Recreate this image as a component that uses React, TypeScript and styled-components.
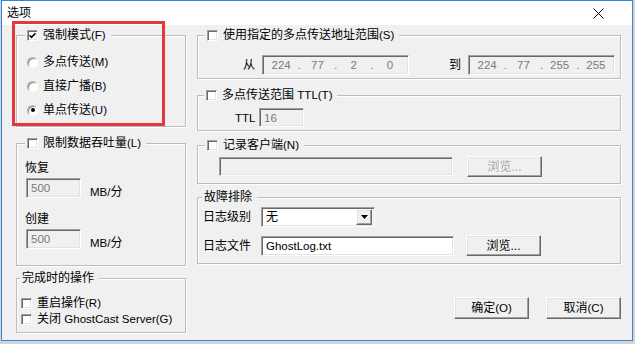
import React from "react";
import styled, { createGlobalStyle, css } from "styled-components";

const GlobalStyle = createGlobalStyle`
  html, body {
    margin: 0;
    padding: 0;
  }
  body {
    background: #d4d4d4;
    font-family: "Liberation Sans", "Noto Sans CJK SC", sans-serif;
    font-size: 12px;
    color: #000;
  }
  #root {
    width: 635px;
    height: 344px;
    overflow: hidden;
  }
`;

const sunken = css`
  box-sizing: border-box;
  border: 1px solid;
  border-color: #a0a0a0 #fff #fff #a0a0a0;
  box-shadow: inset 1px 1px 0 #696969, inset -1px -1px 0 #e3e3e3;
`;

const raised = css`
  box-sizing: border-box;
  border: 1px solid;
  border-color: #fff #696969 #696969 #fff;
  box-shadow: inset -1px -1px 0 #a0a0a0, inset 1px 1px 0 #e3e3e3;
`;

// Latin runs are drawn a touch smaller, as the dialog's UI font does
const Latin = styled.span`
  font-size: 11.5px;
`;

const DialogWindow = styled.div`
  position: relative;
  box-sizing: border-box;
  width: 632px;
  height: 341px;
  margin-left: 1px;
  border: 1px solid #2f86d8;
  background: #f0f0f0;
  display: flex;
  flex-direction: column;
`;

const TitleBar = styled.div`
  flex: none;
  height: 24px;
  background: #fff;
  display: flex;
  align-items: center;
  justify-content: space-between;
  padding: 0 28px 0 5px;
`;

const Title = styled.span`
  line-height: 14px;
`;

const CloseIcon = styled.svg`
  display: block;
`;

const Body = styled.div`
  display: grid;
  grid-template-columns: 170px 424px;
  column-gap: 11px;
  padding: 10px 0 0 14px;
`;

const Column = styled.div`
  display: flex;
  flex-direction: column;
`;

const GroupBox = styled.div<{ $height: number; $gap?: number }>`
  position: relative;
  flex: none;
  box-sizing: border-box;
  height: ${(p) => p.$height}px;
  margin-top: ${(p) => p.$gap ?? 0}px;
  border: 1px solid #bcbcbc;
  box-shadow: inset 1px 1px 0 #fff, 1px 1px 0 #fff;
`;

const GroupLegend = styled.div<{ $left: number }>`
  position: absolute;
  top: -8px;
  left: ${(p) => p.$left}px;
  height: 14px;
  padding: 0 5px 0 2px;
  background: #f0f0f0;
  display: flex;
  align-items: center;
  gap: 5px;
  line-height: 14px;
  white-space: nowrap;
`;

const CheckBox = styled.span`
  ${sunken};
  flex: none;
  width: 11px;
  height: 11px;
  background: #fff;
  display: inline-flex;
  align-items: center;
  justify-content: center;
`;

const Radio = styled.span<{ $on?: boolean }>`
  ${sunken};
  flex: none;
  width: 11px;
  height: 11px;
  border-radius: 50%;
  border-color: #b4b4b4 #fff #fff #b4b4b4;
  box-shadow: inset 1px 1px 0 #8a8a8a;
  background: #fff;
  display: inline-flex;
  align-items: center;
  justify-content: center;

  &::after {
    content: "";
    display: ${(p) => (p.$on ? "block" : "none")};
    width: 4px;
    height: 4px;
    border-radius: 50%;
    background: #000;
  }
`;

const OptionList = styled.div<{ $pad: string }>`
  display: flex;
  flex-direction: column;
  padding: ${(p) => p.$pad};
`;

const OptionRow = styled.div<{ $h: number }>`
  height: ${(p) => p.$h}px;
  display: flex;
  align-items: center;
  gap: 5px;
  line-height: 14px;
  white-space: nowrap;
`;

const TextField = styled.div<{ $width: number; $height: number; $disabled?: boolean }>`
  ${sunken};
  flex: none;
  width: ${(p) => p.$width}px;
  height: ${(p) => p.$height}px;
  padding-left: 4px;
  background: ${(p) => (p.$disabled ? "#f0f0f0" : "#fff")};
  color: ${(p) => (p.$disabled ? "#7a7a7a" : "#000")};
  font-size: 11.5px;
  display: flex;
  align-items: center;
  line-height: 14px;
`;

const RateForm = styled.div`
  display: flex;
  flex-direction: column;
  padding: 17px 0 0 8px;
`;

const FieldLabel = styled.div<{ $gap?: number }>`
  line-height: 14px;
  margin-top: ${(p) => p.$gap ?? 0}px;
`;

const RateRow = styled.div`
  display: flex;
  align-items: flex-start;
  margin-top: 3px;
  padding-left: 1px;
`;

const Unit = styled.span`
  margin-left: 9px;
  padding-top: 7px;
  line-height: 14px;
`;

const RangeRow = styled.div`
  display: flex;
  align-items: center;
  gap: 7px;
  padding: 19px 0 0 45px;
`;

const RangeLabel = styled.span<{ $gap?: number }>`
  margin-left: ${(p) => p.$gap ?? 0}px;
  line-height: 14px;
`;

const IpBox = styled.div`
  ${sunken};
  flex: none;
  width: 147px;
  height: 20px;
  background: #f0f0f0;
  color: #7a7a7a;
  font-size: 11.5px;
  display: flex;
  align-items: center;
  line-height: 14px;
`;

const IpPart = styled.span`
  flex: 1;
  text-align: center;
`;

const IpDot = styled.span`
  width: 0;
  display: flex;
  justify-content: center;
`;

const InlineRow = styled.div<{ $pad: string; $gap?: number }>`
  display: flex;
  align-items: center;
  gap: ${(p) => p.$gap ?? 0}px;
  padding: ${(p) => p.$pad};
`;

const FixedLabel = styled.span<{ $width: number }>`
  flex: none;
  width: ${(p) => p.$width}px;
  line-height: 14px;
  white-space: nowrap;
`;

const LogForm = styled.div`
  display: flex;
  flex-direction: column;
  gap: 8px;
  padding: 9px 0 0 5px;
`;

const LogRow = styled.div`
  display: flex;
  align-items: center;
`;

const ComboBox = styled.div`
  ${sunken};
  flex: none;
  width: 114px;
  height: 20px;
  background: #fff;
  display: flex;
  align-items: center;
  justify-content: space-between;
  padding: 0 2px 0 4px;
  line-height: 14px;
`;

const DropButton = styled.span`
  ${raised};
  width: 16px;
  height: 16px;
  background: #f0f0f0;
  display: flex;
  align-items: center;
  justify-content: center;
`;

const PushButton = styled.button<{ $height: number; $disabled?: boolean; $gap?: number }>`
  ${raised};
  flex: none;
  width: 75px;
  height: ${(p) => p.$height}px;
  margin: 0 0 0 ${(p) => p.$gap ?? 0}px;
  padding: 0;
  background: #f0f0f0;
  font: inherit;
  line-height: 14px;
  color: ${(p) => (p.$disabled ? "#a0a0a0" : "#000")};
  text-shadow: ${(p) => (p.$disabled ? "1px 1px 0 #fff" : "none")};
  display: flex;
  align-items: center;
  justify-content: center;
`;

const ButtonBar = styled.div`
  display: flex;
  justify-content: flex-end;
  gap: 17px;
  margin-top: 33px;
`;

const Highlight = styled.div`
  position: absolute;
  left: 10px;
  top: 20px;
  width: 153px;
  height: 105px;
  box-sizing: border-box;
  border: 3px solid #e5383e;
  pointer-events: none;
`;

const Check = () => (
  <svg width="7" height="7" viewBox="0 0 7 7">
    <path d="M0.6 3.3 L2.6 5.4 L6.4 1.2" fill="none" stroke="#000" strokeWidth="1.6" />
  </svg>
);

const IpAddress: React.FC<{ parts: string[] }> = ({ parts }) => (
  <IpBox>
    {parts.map((part, i) => (
      <React.Fragment key={i}>
        {i > 0 && <IpDot>.</IpDot>}
        <IpPart>{part}</IpPart>
      </React.Fragment>
    ))}
  </IpBox>
);

const App: React.FC = () => {
  return (
    <>
      <GlobalStyle />
      <DialogWindow>
        <TitleBar>
          <Title>选项</Title>
          <CloseIcon width="11" height="11" viewBox="0 0 11 11">
            <path d="M0.5 0.5 L10.5 10.5 M10.5 0.5 L0.5 10.5" stroke="#000" strokeWidth="1" />
          </CloseIcon>
        </TitleBar>

        <Body>
          <Column>
            <GroupBox $height={92}>
              <GroupLegend $left={8}>
                <CheckBox>
                  <Check />
                </CheckBox>
                <span>
                  强制模式<Latin>(F)</Latin>
                </span>
              </GroupLegend>
              <OptionList $pad="14px 0 0 10px">
                <OptionRow $h={24}>
                  <Radio />
                  <span>
                    多点传送<Latin>(M)</Latin>
                  </span>
                </OptionRow>
                <OptionRow $h={24}>
                  <Radio />
                  <span>
                    直接广播<Latin>(B)</Latin>
                  </span>
                </OptionRow>
                <OptionRow $h={24}>
                  <Radio $on />
                  <span>
                    单点传送<Latin>(U)</Latin>
                  </span>
                </OptionRow>
              </OptionList>
            </GroupBox>

            <GroupBox $height={123} $gap={16}>
              <GroupLegend $left={8}>
                <CheckBox />
                <span>
                  限制数据吞吐量<Latin>(L)</Latin>
                </span>
              </GroupLegend>
              <RateForm>
                <FieldLabel>恢复</FieldLabel>
                <RateRow>
                  <TextField $width={55} $height={20} $disabled>
                    500
                  </TextField>
                  <Unit>
                    <Latin>MB/</Latin>分
                  </Unit>
                </RateRow>
                <FieldLabel $gap={13}>创建</FieldLabel>
                <RateRow>
                  <TextField $width={55} $height={20} $disabled>
                    500
                  </TextField>
                  <Unit>
                    <Latin>MB/</Latin>分
                  </Unit>
                </RateRow>
              </RateForm>
            </GroupBox>

            <GroupBox $height={55} $gap={12}>
              <GroupLegend $left={3}>完成时的操作</GroupLegend>
              <OptionList $pad="16px 0 0 4px">
                <OptionRow $h={16}>
                  <CheckBox />
                  <span>
                    重启操作<Latin>(R)</Latin>
                  </span>
                </OptionRow>
                <OptionRow $h={16}>
                  <CheckBox />
                  <span>
                    关闭 <Latin>GhostCast Server(G)</Latin>
                  </span>
                </OptionRow>
              </OptionList>
            </GroupBox>
          </Column>

          <Column>
            <GroupBox $height={44}>
              <GroupLegend $left={7}>
                <CheckBox />
                <span>
                  使用指定的多点传送地址范围<Latin>(S)</Latin>
                </span>
              </GroupLegend>
              <RangeRow>
                <RangeLabel>从</RangeLabel>
                <IpAddress parts={["224", "77", "2", "0"]} />
                <RangeLabel $gap={33}>到</RangeLabel>
                <IpAddress parts={["224", "77", "255", "255"]} />
              </RangeRow>
            </GroupBox>

            <GroupBox $height={36} $gap={16}>
              <GroupLegend $left={6}>
                <CheckBox />
                <span>
                  多点传送范围 <Latin>TTL(T)</Latin>
                </span>
              </GroupLegend>
              <InlineRow $pad="12px 0 0 37px">
                <FixedLabel $width={24}>
                  <Latin>TTL</Latin>
                </FixedLabel>
                <TextField $width={45} $height={19} $disabled>
                  16
                </TextField>
              </InlineRow>
            </GroupBox>

            <GroupBox $height={39} $gap={14}>
              <GroupLegend $left={7}>
                <CheckBox />
                <span>
                  记录客户端<Latin>(N)</Latin>
                </span>
              </GroupLegend>
              <InlineRow $pad="10px 0 0 21px" $gap={14}>
                <TextField $width={234} $height={19} $disabled />
                <PushButton $height={21} $disabled>
                  浏览...
                </PushButton>
              </InlineRow>
            </GroupBox>

            <GroupBox $height={67} $gap={13}>
              <GroupLegend $left={4}>故障排除</GroupLegend>
              <LogForm>
                <LogRow>
                  <FixedLabel $width={58}>日志级别</FixedLabel>
                  <ComboBox>
                    无
                    <DropButton>
                      <svg width="7" height="4" viewBox="0 0 7 4">
                        <path d="M0 0 H7 L3.5 4 Z" fill="#000" />
                      </svg>
                    </DropButton>
                  </ComboBox>
                </LogRow>
                <LogRow>
                  <FixedLabel $width={58}>日志文件</FixedLabel>
                  <TextField $width={193} $height={20}>
                    GhostLog.txt
                  </TextField>
                  <PushButton $height={21} $gap={12}>
                    浏览...
                  </PushButton>
                </LogRow>
              </LogForm>
            </GroupBox>

            <ButtonBar>
              <PushButton $height={22}>
                <span>
                  确定<Latin>(O)</Latin>
                </span>
              </PushButton>
              <PushButton $height={22}>
                <span>
                  取消<Latin>(C)</Latin>
                </span>
              </PushButton>
            </ButtonBar>
          </Column>
        </Body>

        <Highlight />
      </DialogWindow>
    </>
  );
};

export default App;
